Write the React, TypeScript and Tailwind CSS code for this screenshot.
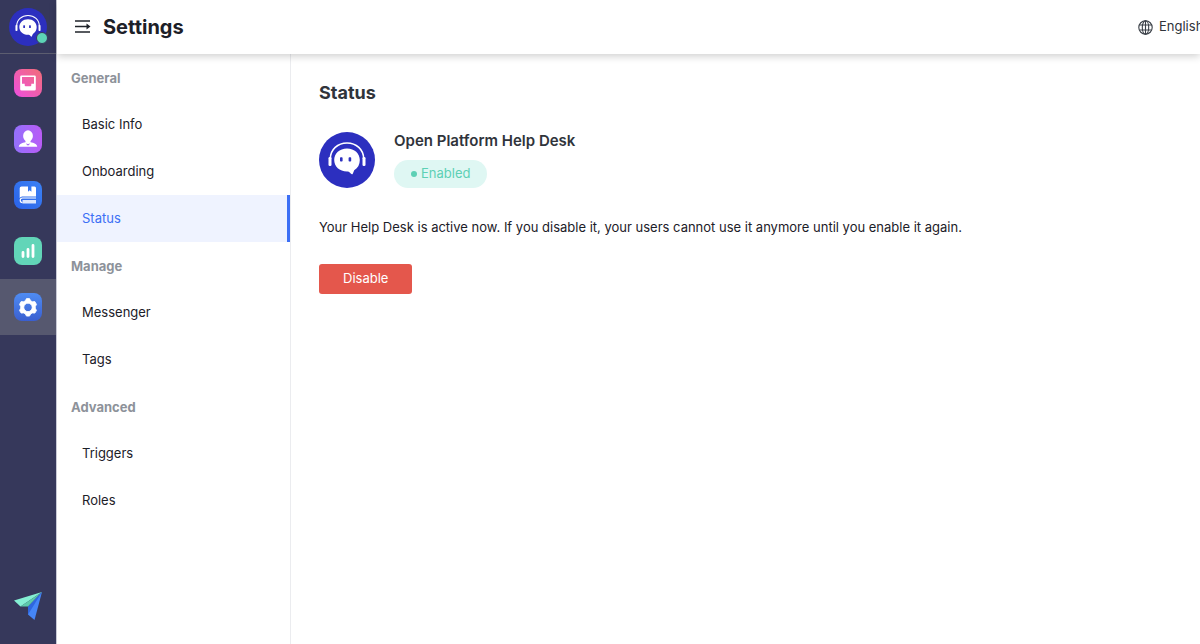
import React from 'react';

interface MenuGroup {
  title: string;
  items: string[];
}

const menuGroups: MenuGroup[] = [
  { title: 'General', items: ['Basic Info', 'Onboarding', 'Status'] },
  { title: 'Manage', items: ['Messenger', 'Tags'] },
  { title: 'Advanced', items: ['Triggers', 'Roles'] },
];

const activeItem = 'Status';

const HelpDeskLogo: React.FC<{ className?: string }> = ({ className }) => (
  <svg viewBox="0 0 56 56" className={className} aria-hidden="true">
    <circle cx="28" cy="28" r="28" fill="#2c2fbf" />
    <path d="M11.300 27C11.300 17.500 18.800 11 28 11s16.700 6.500 16.700 16" fill="none" stroke="#fff" strokeWidth="1.600" />
    <rect x="9.500" y="25" width="3" height="9" rx="1.200" fill="#fff" />
    <rect x="43.500" y="25" width="3" height="9" rx="1.200" fill="#fff" />
    <path d="M28 16.500c-7.500 0-12.800 5-12.800 11.500S20.500 39.500 28 39.500c1.500 0 2.700.5 4 2.300.7.8 1.500.6 1.900-.4l1.300-3.200C39 36 40.800 32.300 40.800 28 40.800 21.500 35.500 16.500 28 16.500Z" fill="#fff" />
    <rect x="21" y="25.300" width="2.600" height="4.200" rx="0.800" fill="#2c2fbf" />
    <rect x="29.600" y="25.300" width="2.600" height="4.200" rx="0.800" fill="#2c2fbf" />
  </svg>
);

const InboxIcon = () => (
  <svg viewBox="0 0 28 28" className="size-7" aria-hidden="true">
    <defs>
      <linearGradient id="inbox" x1="0" y1="1" x2="1" y2="0">
        <stop offset="0" stopColor="#ee4fe0" />
        <stop offset="1" stopColor="#f26d76" />
      </linearGradient>
    </defs>
    <rect width="28" height="28" rx="8" fill="url(#inbox)" />
    <path fillRule="evenodd" d="M7.500 6.500h13a1.300 1.300 0 0 1 1.300 1.300v12.400a1.300 1.300 0 0 1-1.300 1.300h-13a1.300 1.300 0 0 1-1.300-1.300V7.800a1.300 1.300 0 0 1 1.300-1.300ZM8 8v6.800h2.700v1.400a1 1 0 0 0 1 1h4.600a1 1 0 0 0 1-1v-1.400H20V8Z" fill="#fff" />
  </svg>
);

const ContactsIcon = () => (
  <svg viewBox="0 0 28 28" className="size-7" aria-hidden="true">
    <defs>
      <linearGradient id="contacts" x1="0" y1="0" x2="1" y2="0">
        <stop offset="0" stopColor="#9370fb" />
        <stop offset="1" stopColor="#b95cf6" />
      </linearGradient>
    </defs>
    <rect width="28" height="28" rx="8" fill="url(#contacts)" />
    <ellipse cx="14" cy="11" rx="4.900" ry="5.800" fill="#fff" />
    <path d="M11.500 15v3.500h5V15Z" fill="#fff" />
    <path d="M11.500 17.300c-3.500.8-6.500 1.500-6.700 4.500h18.400c-.2-3-3.200-3.700-6.700-4.500Z" fill="#fff" />
    <path d="m12.300 18.300 1.700 1 1.700-1-.6 1.900h-2.200Z" fill="#a567f8" />
  </svg>
);

const BookIcon = () => (
  <svg viewBox="0 0 28 28" className="size-7" aria-hidden="true">
    <defs>
      <linearGradient id="book" x1="0" y1="1" x2="1" y2="0">
        <stop offset="0" stopColor="#2a62e8" />
        <stop offset="1" stopColor="#3b82f6" />
      </linearGradient>
    </defs>
    <rect width="28" height="28" rx="8" fill="url(#book)" />
    <path d="M7.500 5.500h6.500v5.200l1.700-1.500 1.700 1.500V5.500h3.100A1.500 1.500 0 0 1 22 7v8.500H8.500A3 3 0 0 0 5.700 17V7.300a1.800 1.800 0 0 1 1.800-1.800Z" fill="#fff" />
    <path d="M22 17H8.500a2.300 2.300 0 0 0 0 4.600" fill="none" stroke="#fff" strokeWidth="1.200" />
    <path d="M8.500 19h13.500v3.500H8.500Z" fill="#dbe6fd" />
  </svg>
);

const ReportsIcon = () => (
  <svg viewBox="0 0 28 28" className="size-7" aria-hidden="true">
    <rect width="28" height="28" rx="8" fill="#62d5b8" />
    <path d="M9 15.500v4M14 12.500v7M19 8.500v11" stroke="#fff" strokeWidth="2.800" strokeLinecap="round" />
  </svg>
);

const SettingsIcon = () => (
  <svg viewBox="0 0 28 28" className="size-7" aria-hidden="true">
    <defs>
      <linearGradient id="settings" x1="0" y1="0" x2="0" y2="1">
        <stop offset="0" stopColor="#4f8cf3" />
        <stop offset="1" stopColor="#3a5fd0" />
      </linearGradient>
    </defs>
    <rect width="28" height="28" rx="8" fill="url(#settings)" />
    <path
      fillRule="evenodd"
      d="M12.500 5.600h3l1.200 2.200 1.600.9 2.600-.1 1.600 2.800-1.200 2.200v1.600l1.200 2.200-1.600 2.700-2.600-.1-1.600.9-1.200 2.200h-3l-1.200-2.200-1.600-.9-2.600.1-1.600-2.700 1.200-2.200v-1.600l-1.200-2.200 1.600-2.800 2.600.1 1.600-.9ZM14 10.200a4.200 4.200 0 1 0 0 8.400 4.200 4.200 0 0 0 0-8.400Z"
      fill="#fff"
      stroke="#fff"
      strokeWidth="0.800"
      strokeLinejoin="round"
    />
  </svg>
);

const PaperPlane = () => (
  <svg viewBox="0 0 28 28" className="size-7" aria-hidden="true">
    <path d="M28 0 0 8.500l6.500 6Z" fill="#84efd3" />
    <path d="M28 0 6.500 14.500h7.500Z" fill="#5cc9ab" />
    <path d="M28 0 14 15v7.500l6.500 5.500Z" fill="#4585f7" />
    <path d="M28 0 14 15v7.500Z" fill="#2f66dd" />
  </svg>
);

const navItems = [
  { label: 'Inbox', icon: <InboxIcon /> },
  { label: 'Contacts', icon: <ContactsIcon /> },
  { label: 'Knowledge Base', icon: <BookIcon /> },
  { label: 'Reports', icon: <ReportsIcon /> },
  { label: 'Settings', icon: <SettingsIcon /> },
];

const Sidebar = () => (
  <aside className="flex w-[57px] shrink-0 flex-col border-r border-[#c9cad6] bg-[#36385b]">
    <div className="flex h-[54px] shrink-0 items-center justify-center border-b border-[#5c5d70]">
      <button type="button" aria-label="Profile" className="relative">
        <HelpDeskLogo className="size-[38px]" />
        <span className="absolute -right-px bottom-0.5 size-3 rounded-full border border-[#36385b] bg-[#5dd3b6]" />
      </button>
    </div>
    <nav className="flex flex-col pt-px">
      {navItems.map((item) => (
        <a
          key={item.label}
          href="#"
          aria-label={item.label}
          className={item.label === 'Settings' ? 'flex h-14 items-center justify-center bg-[#56586f]' : 'flex h-14 items-center justify-center'}
        >
          {item.icon}
        </a>
      ))}
    </nav>
    <a href="#" aria-label="Home" className="mt-auto flex justify-center pb-6">
      <PaperPlane />
    </a>
  </aside>
);

const Header = () => (
  <header className="relative z-10 flex h-[54px] shrink-0 items-center bg-white pl-[18px] shadow-[0_2px_8px_rgba(0,0,0,0.2)]">
    <button type="button" aria-label="Toggle menu" className="mr-3">
      <svg viewBox="0 0 16 16" className="size-4" fill="none" stroke="#20242b" strokeWidth="1.700" aria-hidden="true">
        <path d="M0 2h15M0 7.500h13M0 13h15" />
        <path d="m11.500 4.500 4 3-4 3Z" fill="#20242b" stroke="none" />
      </svg>
    </button>
    <h1 className="text-xl font-bold text-[#1c2028]">Settings</h1>
    <button type="button" className="ml-auto flex w-[62px] items-center gap-1.5 overflow-hidden whitespace-nowrap text-[13px] text-[#30343b]">
      <svg viewBox="0 0 15 15" className="size-[15px] shrink-0" fill="none" stroke="#3b4048" strokeWidth="1.100" aria-hidden="true">
        <circle cx="7.500" cy="7.500" r="6.700" />
        <ellipse cx="7.500" cy="7.500" rx="3.200" ry="6.700" />
        <path d="M7.500.8v13.400M1.500 5h12M1.500 10h12" />
      </svg>
      English
    </button>
  </header>
);

const SettingsMenu = () => (
  <nav className="w-[234px] shrink-0 border-r border-[#ebecef] text-[13px]">
    {menuGroups.map((group) => (
      <section key={group.title}>
        <h2 className="flex h-[47px] items-center pt-0.5 pl-3.5 font-bold text-[#8d929a]">{group.title}</h2>
        <ul>
          {group.items.map((item) => (
            <li key={item}>
              <a
                href="#"
                className={
                  item === activeItem
                    ? 'flex h-[47px] items-center border-r-3 border-[#3c6ff5] bg-[#eff3ff] pl-[25px] text-[#3c6ff5]'
                    : 'flex h-[47px] items-center pl-[25px] text-[#1c2028]'
                }
              >
                {item}
              </a>
            </li>
          ))}
        </ul>
      </section>
    ))}
  </nav>
);

const StatusPanel = () => (
  <main className="min-w-0 flex-1 px-7 pt-[25px] text-[13px] text-[#1c2028]">
    <h2 className="text-lg leading-7 font-bold text-[#30343b]">Status</h2>
    <div className="mt-[25px] flex gap-[19px]">
      <HelpDeskLogo className="size-14 shrink-0" />
      <div className="flex flex-col items-start justify-between">
        <h3 className="text-[15px] leading-[18px] font-semibold text-[#30343b]">Open Platform Help Desk</h3>
        <span className="flex h-7 items-center gap-1 rounded-full bg-[#dff7f3] px-[17px] text-[#5dd0b5]">
          <span className="size-1.5 rounded-full bg-[#5dd0b5]" />
          Enabled
        </span>
      </div>
    </div>
    <p className="mt-[29px] leading-5">Your Help Desk is active now. If you disable it, your users cannot use it anymore until you enable it again.</p>
    <button type="button" className="mt-[27px] h-[30px] rounded-[3px] bg-[#e4574c] px-6 text-white">
      Disable
    </button>
  </main>
);

export default function App() {
  return (
    <div className="flex min-h-screen bg-white font-['Inter','Liberation_Sans',sans-serif]">
      <Sidebar />
      <div className="flex min-w-0 flex-1 flex-col">
        <Header />
        <div className="flex flex-1">
          <SettingsMenu />
          <StatusPanel />
        </div>
      </div>
    </div>
  );
}
